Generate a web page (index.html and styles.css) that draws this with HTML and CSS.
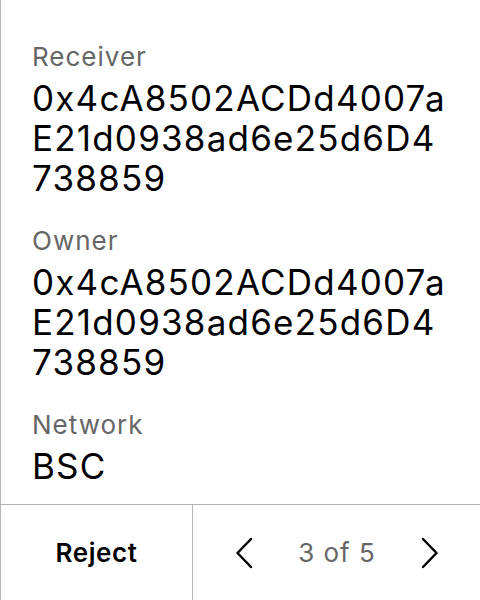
FILE: index.html
```html
<!DOCTYPE html>
<html>
<head>
<meta charset="utf-8">
<link rel="stylesheet" href="styles.css">
</head>
<body>
<div class="screen">
  <div class="details">
    <div class="field">
      <div class="label">Receiver</div>
      <div class="value">0x4cA8502ACDd4007a<br>E21d0938ad6e25d6D4<br>738859</div>
    </div>
    <div class="field">
      <div class="label">Owner</div>
      <div class="value">0x4cA8502ACDd4007a<br>E21d0938ad6e25d6D4<br>738859</div>
    </div>
    <div class="field">
      <div class="label">Network</div>
      <div class="value">BSC</div>
    </div>
  </div>
  <div class="footer">
    <div class="reject">Reject</div>
    <div class="pager">
      <svg class="chev" width="18" height="32" viewBox="0 0 18 32"><path d="M16 2 L2.5 16 L16 30" fill="none" stroke="#000" stroke-width="2.5" stroke-linecap="round" stroke-linejoin="round"/></svg>
      <span class="count">3 of 5</span>
      <svg class="chev" width="18" height="32" viewBox="0 0 18 32"><path d="M2 2 L15.5 16 L2 30" fill="none" stroke="#000" stroke-width="2.5" stroke-linecap="round" stroke-linejoin="round"/></svg>
    </div>
  </div>
</div>
</body>
</html>
```

FILE: styles.css
```css
html, body {
  margin: 0;
  padding: 0;
  background: #fff;
}
body {
  font-family: Inter, "Noto Sans", sans-serif;
  color: #000;
}
.screen {
  width: 480px;
  height: 600px;
  box-sizing: border-box;
  border-left: 1px solid #b4b4b4;
  display: flex;
  flex-direction: column;
}
.details {
  flex: 1;
  padding: 41px 0 0 31px;
  display: flex;
  flex-direction: column;
  gap: 27px;
}
.label {
  font-size: 26px;
  line-height: 32px;
  letter-spacing: 1px;
  color: #666;
}
.value {
  margin-top: 5px;
  font-size: 35px;
  line-height: 40px;
  letter-spacing: 1.2px;
  color: #000;
}
.footer {
  height: 95px;
  border-top: 1px solid #b4b4b4;
  display: flex;
}
.reject {
  width: 191px;
  border-right: 1px solid #b4b4b4;
  display: flex;
  align-items: center;
  justify-content: center;
  font-size: 26px;
  font-weight: 600;
  letter-spacing: 0.6px;
}
.pager {
  flex: 1;
  display: flex;
  align-items: center;
  justify-content: space-between;
  padding: 0 41px 0 42px;
}
.count {
  font-size: 26px;
  letter-spacing: 1px;
  color: #666;
}
```
